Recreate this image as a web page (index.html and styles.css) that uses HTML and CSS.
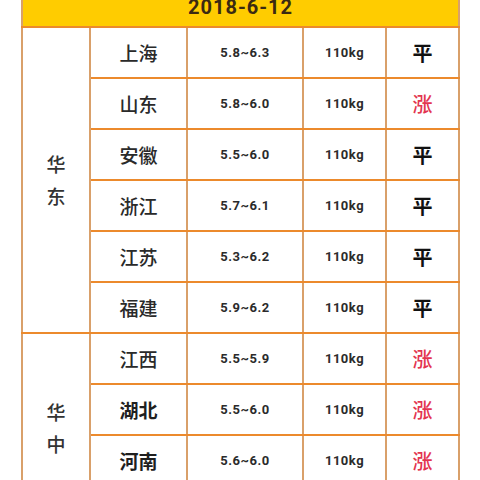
FILE: index.html
```html
<!DOCTYPE html>
<html lang="zh">
<head>
<meta charset="utf-8">
<link rel="stylesheet" href="styles.css">
</head>
<body>
<table class="price">
  <colgroup>
    <col class="c1"><col class="c2"><col class="c3"><col class="c4"><col class="c5">
  </colgroup>
  <thead>
    <tr><th colspan="5" class="head">2018-6-12</th></tr>
  </thead>
  <tbody>
    <tr><td rowspan="6" class="region"><span>华</span><span>东</span></td><td class="prov">上海</td><td class="num">5.8~6.3</td><td class="num">110kg</td><td class="flat">平</td></tr>
    <tr><td class="prov">山东</td><td class="num">5.8~6.0</td><td class="num">110kg</td><td class="up">涨</td></tr>
    <tr><td class="prov">安徽</td><td class="num">5.5~6.0</td><td class="num">110kg</td><td class="flat">平</td></tr>
    <tr><td class="prov">浙江</td><td class="num">5.7~6.1</td><td class="num">110kg</td><td class="flat">平</td></tr>
    <tr><td class="prov">江苏</td><td class="num">5.3~6.2</td><td class="num">110kg</td><td class="flat">平</td></tr>
    <tr><td class="prov">福建</td><td class="num">5.9~6.2</td><td class="num">110kg</td><td class="flat">平</td></tr>
    <tr><td rowspan="4" class="region region-mid"><span>华</span><span>中</span></td><td class="prov">江西</td><td class="num">5.5~5.9</td><td class="num">110kg</td><td class="up">涨</td></tr>
    <tr><td class="prov strong">湖北</td><td class="num">5.5~6.0</td><td class="num">110kg</td><td class="up">涨</td></tr>
    <tr><td class="prov strong">河南</td><td class="num">5.6~6.0</td><td class="num">110kg</td><td class="up">涨</td></tr>
    <tr><td class="prov strong">湖南</td><td class="num">5.6~6.0</td><td class="num">110kg</td><td class="up">涨</td></tr>
  </tbody>
</table>
</body>
</html>
```
FILE: styles.css
```css
html, body {
  margin: 0;
  padding: 0;
  background: #ffffff;
  overflow: hidden;
}
body {
  width: 480px;
  height: 480px;
  font-family: "Noto Sans CJK SC", "Noto Sans", sans-serif;
  color: #333333;
}
.price {
  border-collapse: collapse;
  table-layout: fixed;
  width: 437px;
  margin: -16px 0 0 21px;
}
.c1 { width: 68px; }
.c2 { width: 97px; }
.c3 { width: 116px; }
.c4 { width: 83px; }
.c5 { width: 73px; }
.head {
  height: 43px;
  padding: 3px 0 0 0;
  box-sizing: border-box;
  background: #ffcc00;
  color: #3b2a12;
  font-family: Roboto, "Liberation Sans", sans-serif;
  font-weight: 700;
  font-size: 20px;
  line-height: 24px;
  letter-spacing: 1px;
  text-align: center;
  vertical-align: middle;
  border-left: 2px solid #d9a06a;
  border-right: 2px solid #d9a06a;
  border-bottom: 2px solid #ec8a2c;
}
td {
  height: 49px;
  padding: 0;
  text-align: center;
  vertical-align: middle;
  border-left: 2px solid #d9a06a;
  border-right: 2px solid #d9a06a;
  border-top: 2px solid #ec8a2c;
  border-bottom: 2px solid #ec8a2c;
}
.region {
  font-size: 19px;
  line-height: 32px;
  font-weight: 500;
}
.region-mid {
  padding-bottom: 14px;
}
.region span {
  display: block;
}
.prov {
  font-size: 19px;
  font-weight: 500;
  color: #2a2a2a;
}
.prov.strong {
  font-weight: 700;
  color: #1f1f1f;
}
.num {
  font-family: Roboto, "Liberation Sans", sans-serif;
  font-weight: 700;
  font-size: 13px;
  letter-spacing: 0.5px;
  color: #2b2b2b;
}
.flat {
  font-size: 20px;
  font-weight: 700;
  color: #111111;
}
.up {
  font-size: 20px;
  font-weight: 500;
  color: #e33550;
}
```
